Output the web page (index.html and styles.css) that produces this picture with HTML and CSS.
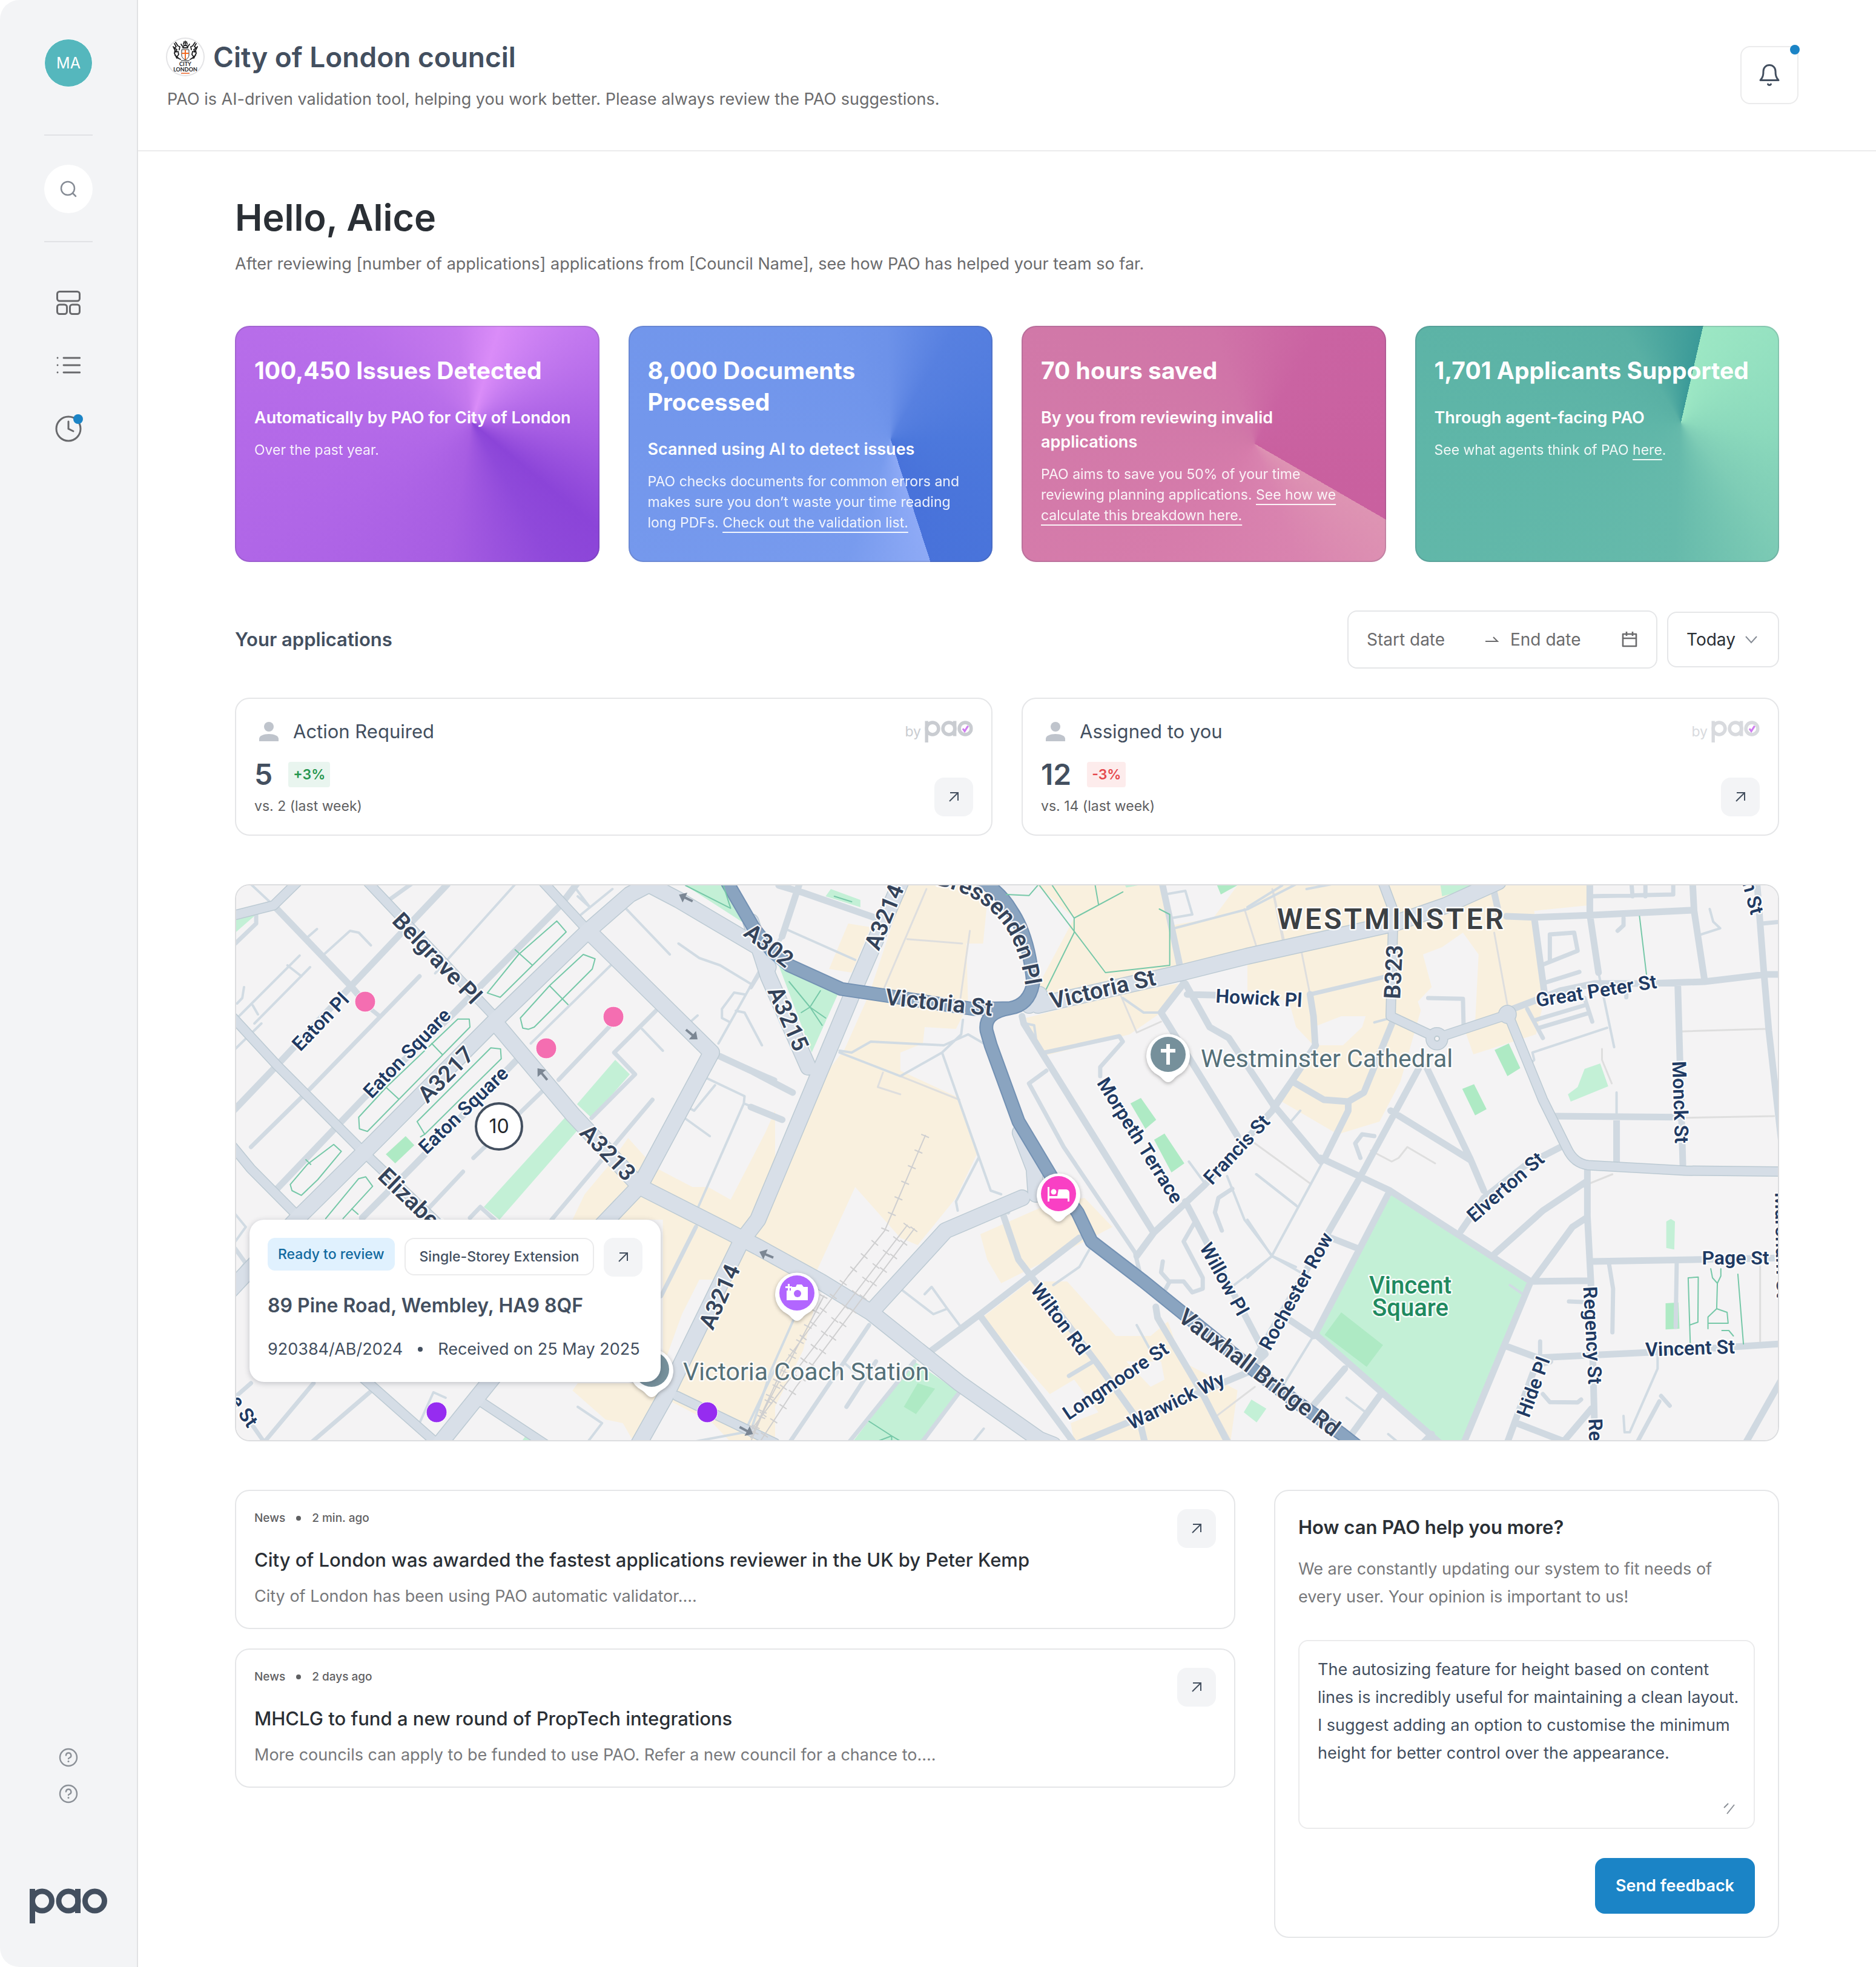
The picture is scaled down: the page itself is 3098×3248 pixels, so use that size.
FILE: index.html
```html
<!DOCTYPE html>
<html lang="en">
<head>
<meta charset="utf-8">
<title>PAO – City of London council</title>
<meta name="viewport" content="width=device-width, initial-scale=1">
<link rel="stylesheet" href="styles.css">
</head>
<body>
<svg class="sprite" aria-hidden="true">
  <symbol id="i-open" viewBox="0 0 20 20"><path d="M3 17 17 3M4 3h13v13" fill="none" stroke="currentColor" stroke-width="2"/></symbol>
  <symbol id="i-help" viewBox="0 0 32 32"><g fill="none" stroke="currentColor" stroke-width="2.400" stroke-linecap="round" stroke-linejoin="round"><circle cx="16" cy="16" r="14"/><path d="M12 12.500a4.200 4.200 0 1 1 6 4c-1.300.6-2 1-2 1.500"/></g><circle cx="16" cy="22.500" r="1.500" fill="currentColor"/></symbol>
  <symbol id="i-person" viewBox="0 0 48 48"><circle cx="24" cy="16" r="8" fill="currentColor"/><path d="M8 40v-4c0-5 7-8 16-8s16 3 16 8v4z" fill="currentColor"/></symbol>
  <symbol id="i-pao" viewBox="0 0 128 58"><g fill="none" stroke="currentColor" stroke-width="9"><circle cx="20.500" cy="21" r="16"/><circle cx="64" cy="21" r="16"/><circle cx="107.500" cy="21" r="16"/><path d="M4.500 1v57M79.500 1v40"/></g></symbol>
</svg>

<div class="app">
  <aside class="sidebar">
    <div class="sidebar-top">
      <a class="avatar" href="#profile">MA</a>
      <hr class="rule">
      <button class="search" type="button" aria-label="Search">
        <svg width="32" height="32" viewBox="0 0 32 32" fill="none" stroke="currentColor" stroke-width="2.500" stroke-linecap="round"><circle cx="15" cy="15" r="11"/><path d="m23 23 5 5"/></svg>
      </button>
      <hr class="rule">
      <nav class="nav" aria-label="Main">
        <a href="#dashboard" aria-label="Dashboard"><svg width="40" height="40" viewBox="0 0 40 40" fill="none" stroke="currentColor" stroke-width="3"><rect x="1.500" y="1.500" width="37" height="15.500" rx="4"/><rect x="1.500" y="23" width="16" height="15.500" rx="4"/><rect x="22.500" y="23" width="16" height="15.500" rx="4"/></svg></a>
        <a href="#list" aria-label="Applications"><svg width="40" height="40" viewBox="0 0 40 40" fill="none" stroke="currentColor" stroke-width="2.800" stroke-linecap="round"><path d="M12 8h27M12 20h27M12 32h27M2 8h.1M2 20h.1M2 32h.1"/></svg></a>
        <a class="nav-badged" href="#history" aria-label="History"><svg width="44" height="44" viewBox="0 0 44 44" fill="none" stroke="currentColor" stroke-width="3" stroke-linecap="round"><circle cx="22" cy="22" r="20"/><path d="M22 10v12l8 4"/></svg><span class="dot dot-nav"></span></a>
      </nav>
    </div>
    <div class="sidebar-bottom">
      <a href="#help" aria-label="Help"><svg width="32" height="32"><use href="#i-help"/></svg></a>
      <a href="#support" aria-label="Support"><svg width="32" height="32"><use href="#i-help"/></svg></a>
      <svg class="brand" width="128" height="58" role="img" aria-label="pao"><use href="#i-pao"/></svg>
    </div>
  </aside>

  <div class="page">
    <header class="header">
      <div>
        <div class="council">
          <svg class="crest" width="60" height="60" viewBox="0 0 60 60" role="img" aria-label="City of London crest">
            <path d="M24 18h12v9c0 4-3 6-6 8-3-2-6-4-6-8z" fill="#fff" stroke="#222" stroke-width="1"/>
            <path d="M30 18v16M24 24h12" stroke="#f26a21" stroke-width="2"/>
            <g fill="none" stroke="#1d1d1f" stroke-width="1.800" stroke-linecap="round" stroke-linejoin="round">
              <path d="M12 8l3 5-3 2 4 3-2 4 4-1 1 5-3 4 4 3M14 6l4 6 3 1-1 5M10 13l3 6-1 5 4 8M13 27l5 5 4 2M48 8l-3 5 3 2-4 3 2 4-4-1-1 5 3 4-4 3M46 6l-4 6-3 1 1 5M50 13l-3 6 1 5-4 8M47 27l-5 5-4 2"/>
              <path d="M26 15c0-3 2-4 4-4s4 1 4 4zM27 9l1-4M30 9V4M33 9l-1-4M25 12l-2-3M35 12l2-3"/>
            </g>
            <path d="M23 36h14" stroke="#888" stroke-width="2"/>
            <text x="30" y="45" text-anchor="middle" class="crest-text">CITY</text>
            <text x="30" y="54" text-anchor="middle" class="crest-text">LONDON</text>
            <path d="M23 57h14" stroke="#f08a5d" stroke-width="2"/>
          </svg>
          <h1>City of London council</h1>
        </div>
        <p class="lead">PAO is AI-driven validation tool, helping you work better. Please always review the PAO suggestions.</p>
      </div>
      <button class="bell" type="button" aria-label="Notifications">
        <svg width="40" height="40" viewBox="0 0 40 40" fill="none" stroke="currentColor" stroke-width="3" stroke-linecap="round" stroke-linejoin="round"><path d="M20 3.500c-6 0-10 4.500-10 10 0 6-.5 10-5 15h30c-4.500-5-5-9-5-15 0-5.500-4-10-10-10zM17.500 35c1 2 4 2 5 0"/></svg>
        <span class="dot dot-bell"></span>
      </button>
    </header>

    <main class="main">
      <section class="intro">
        <h2>Hello, Alice</h2>
        <p class="lead">After reviewing [number of applications] applications from [Council Name], see how PAO has helped your team so far.</p>
      </section>

      <section class="stats" aria-label="Highlights">
        <article class="stat stat-purple">
          <h3>100,450 Issues Detected</h3>
          <h4>Automatically by PAO for City of London</h4>
          <p>Over the past year.</p>
        </article>
        <article class="stat stat-blue">
          <h3>8,000 Documents Processed</h3>
          <h4>Scanned using AI to detect issues</h4>
          <p>PAO checks documents for common errors and makes sure you don’t waste your time reading long PDFs. <a href="#validation">Check out the validation list.</a></p>
        </article>
        <article class="stat stat-pink">
          <h3>70 hours saved</h3>
          <h4>By you from reviewing invalid applications</h4>
          <p>PAO aims to save you 50% of your time reviewing planning applications. <a href="#breakdown">See how we calculate this breakdown here.</a></p>
        </article>
        <article class="stat stat-green">
          <h3>1,701 Applicants Supported</h3>
          <h4>Through agent-facing PAO</h4>
          <p>See what agents think of PAO <a href="#agents">here</a>.</p>
        </article>
      </section>

      <section class="toolbar">
        <h3>Your applications</h3>
        <div class="filters">
          <div class="range">
            <input class="range-start" type="text" placeholder="Start date" aria-label="Start date">
            <svg width="24" height="24" viewBox="0 0 24 24" fill="none" stroke="currentColor" stroke-width="2"><path d="M1 15h20l-7-7"/></svg>
            <input class="range-end" type="text" placeholder="End date" aria-label="End date">
            <svg width="28" height="28" viewBox="0 0 28 28" fill="none" stroke="currentColor" stroke-width="2.600" stroke-linejoin="round"><path d="M3 5h22v20H3zM3 12h22M9 1v7M19 1v7"/></svg>
          </div>
          <label class="period">
            <select aria-label="Period"><option>Today</option></select>
            <svg width="20" height="20" viewBox="0 0 20 20" fill="none" stroke="currentColor" stroke-width="2"><path d="m1 5 9 10 9-10"/></svg>
          </label>
        </div>
      </section>

      <section class="summary">
        <article class="card tally">
          <div>
            <h4><svg width="48" height="48"><use href="#i-person"/></svg>Action Required</h4>
            <p class="tally-value">5 <span class="delta delta-up">+3%</span></p>
            <p class="tally-note">vs. 2 (last week)</p>
          </div>
          <div class="tally-side">
            <span class="by">by <svg width="80" height="36" viewBox="0 0 128 58"><use href="#i-pao" width="128" height="58"/><path d="m101 21 5 7 9-14" fill="none" stroke="#cf7df0" stroke-width="5"/></svg></span>
            <button class="open" type="button" aria-label="Open action required"><svg width="20" height="20"><use href="#i-open"/></svg></button>
          </div>
        </article>
        <article class="card tally">
          <div>
            <h4><svg width="48" height="48"><use href="#i-person"/></svg>Assigned to you</h4>
            <p class="tally-value">12 <span class="delta delta-down">-3%</span></p>
            <p class="tally-note">vs. 14 (last week)</p>
          </div>
          <div class="tally-side">
            <span class="by by-faint">by <svg width="80" height="36" viewBox="0 0 128 58"><use href="#i-pao" width="128" height="58"/><path d="m101 21 5 7 9-14" fill="none" stroke="#cf7df0" stroke-width="5"/></svg></span>
            <button class="open" type="button" aria-label="Open assigned to you"><svg width="20" height="20"><use href="#i-open"/></svg></button>
          </div>
        </article>
      </section>

      <section class="map" aria-label="Map of applications">
        <svg class="map-canvas" viewBox="2 2 2546 916" preserveAspectRatio="xMidYMid slice" role="img" aria-label="Street map of Westminster">
          <defs>
            <g id="roads-l">
              <g transform="translate(-8 -10) scale(.574 .6)"><path d="M0 1135 195 935 385 755 765 390 1030 145 1150 45 1210 15M765 400 985 650 1180 850M1190 10 1290 60 1520 190 1548 245M1385 480 1180 845 1040 985M1030 145 1385 480M760 1370 600 1560"/></g>
              <g transform="translate(852 -10) scale(.574 .6)"><path d="M436 0 300 300 20 940-28 1000-248 1430-330 1570M-318 850-60 975 20 1015 200 1110 345 1195 600 1390 830 1545 870 1560M0 120 50 270 165 520M345 1195 450 1085 560 970 780 880M820 870 815 800 775 700M825 350 1240 260 1428 215 1850 125 2000 75 2150 10M800 350 830 320"/></g>
            </g>
            <g id="roads-m">
              <g transform="translate(1672 -10) scale(.574 .6)"><path d="M385 0 420 90 412 380 545 440 750 375 850 610 920 745Q940 785 980 790L1260 805 1560 808"/><circle cx="545" cy="442" r="18"/><circle cx="748" cy="375" r="12"/></g>
              <g transform="translate(-8 -10) scale(.574 .6)"><path d="M385 0 765 385M890 0 1030 145M0 375 135 515 385 755 620 970M0 105 125 75 205 0M0 730 60 800 200 935M1285 1425 1568 1555M340 1340 600 1560M720 1440 910 1560"/></g>
            </g>
            <g id="roads-a">
              <g transform="translate(852 -10) scale(.574 .6)"><path d="M-75 0 10 140 60 200 110 240 260 305 400 325 640 360 745 358Q800 350 812 290 800 160 750 90 720 40 660 5M745 358Q670 370 678 420L690 460 770 670 870 830 940 920 980 1000 1130 1110 1240 1195 1428 1340 1560 1435 1700 1530 1760 1575"/></g>
            </g>
            <g id="rails"><g transform="translate(852 -10) scale(.574 .6)"><path d="M502 708 385 970 280 1095 100 1330 0 1540M470 965 130 1400 20 1560M450 955 150 1330 0 1520M210 1150 40 1460 0 1550"/></g></g>
            <path id="arrow" d="M-12-2H2v-7L13 0 2 9V2h-14z"/>
            <path id="pin" d="M0 46c-3 0-6-2-9-5-4-5-8-7-13-10A36 36 0 1 1 22 31c-5 3-9 5-13 10-3 3-6 5-9 5z"/>
            <path id="bressenden" d="M1158-2C1215 8 1262 40 1284 84 1298 112 1304 135 1310 172"/>
          </defs>
          <rect width="2550" height="920" fill="#f4f3f4"/>

          <g fill="#f9f0de">
            <g transform="translate(-8 -10) scale(.574 .6)"><path d="M1145 715 1220 795 1330 850 1375 850 1440 885 1540 700 1568 640V1010L1480 990 1568 1040V1540L1450 1480 1290 1420 1160 1550 1130 1500 1080 1490 985 1410 1000 1390H1245V940H985L1020 870 1090 790z"/></g>
            <g transform="translate(852 -10) scale(.574 .6)"><path d="M445 17H685L668 180H620L625 350 590 415 500 410 495 455 430 480V530L600 605 650 760 590 880 480 1010 430 990 300 850 190 1080 0 1000 230 520 270 470 340 320zM0 1040 200 1120 150 1300 20 1550H-60L-110 1500-250 1430-30 1010zM820 17H1568V180L1240 250 850 330 830 290 930 110zM790 385 1060 320 1230 290 1180 370 1090 430 840 490zM660 980 850 900 960 880 1040 960 960 1000 720 1115 680 1050zM665 1210 800 1110 910 1110 1050 1260 1150 1260 1200 1220 1240 1330 1400 1410 1380 1550H930L920 1500 860 1420zM280 125 345 135 290 260 225 250z"/></g>
            <g transform="translate(1672 -10) scale(.574 .6)"><path d="M0 17H980V75L825 90 855 330 830 430 650 485 600 350 500 360 440 560 380 670 260 705 90 610 130 550 190 460 140 410 120 340 0 310z"/></g>
          </g>
          <g fill="#f4f3f4">
            <g transform="translate(-8 -10) scale(.574 .6)"><path d="M1350 1105H1400L1370 1180 1290 1345H1245L1300 1200z"/></g>
            <g transform="translate(852 -10) scale(.574 .6)"><path d="M1185 20H1400L1330 110 1210 130zM1080 1330 1180 1330 1190 1380 1150 1400zM860 1420 930 1380 1000 1470 920 1500zM830 30 910 110 860 220 820 240z"/></g>
            <g transform="translate(1672 -10) scale(.574 .6)"><path d="M505 210 560 190 620 150 665 210 655 400 520 420 490 340 530 300zM270 380 340 380 330 410 275 460H195L190 410z"/></g>
          </g>
          <g fill="#c3f0d6">
            <g transform="translate(-8 -10) scale(.574 .6)"><path d="M1305 17H1440L1480 125 1440 100zM15 108 75 100 15 150zM1108 500 1150 540 1040 660 998 622zM970 652 1003 690 775 940 730 905zM850 1535 890 1555H835z"/></g>
            <g transform="translate(852 -10) scale(.574 .6)"><path d="M80 240 250 320 175 480zM230 30 315 60V80L215 50zM470 1330 600 1415 490 1555H290zM1440 1435 1483 1460 1455 1498 1418 1470zM1075 17H1130L1080 26z"/></g>
            <g transform="translate(1672 -10) scale(.574 .6)"><path d="M415 870 815 1110 620 1560H560L195 1255zM555 17H690L560 50zM922 595 950 575 970 525 1015 510 1038 573 930 615zM1205 945 1218 938 1230 945 1228 1022 1205 1018z"/></g>
          </g>
          <g fill="#aeeac4">
            <g transform="translate(-8 -10) scale(.574 .6)"><path d="M505 710 530 735 475 785 448 760z"/></g>
            <g transform="translate(852 -10) scale(.574 .6)"><path d="M480 1390 530 1405 475 1475 440 1455zM1092 620 1122 605 1166 665 1135 690zM1160 720 1190 703 1247 785 1210 810zM1340 17H1405L1352 45z"/></g>
            <g transform="translate(1672 -10) scale(.574 .6)"><path d="M270 1195 390 1285 343 1345 222 1257zM711 473 752 455 785 523 748 545zM618 580 652 567 688 636 655 653zM1203 1170 1240 1168 1243 1240 1203 1242z"/></g>
          </g>

          <g class="line grey">
            <g transform="translate(852 -10) scale(.574 .6)"><path d="M505 30 380 310M450 168 608 180M630 145 600 350M1065 325 1110 425 1180 395M380 535 365 575 430 595M430 545 600 610M1450 1400 1340 1480 1380 1550M1420 85 1455 190M1500 30 1530 170"/></g>
            <g transform="translate(1672 -10) scale(.574 .6)"><path d="M710 150 750 360M75 40 105 170M155 200 180 320M1245 422 1490 415M1240 660 1515 655M0 715 180 840M355 750 415 780 435 770 460 740 540 785M1020 470V500L1048 565M985 840 1050 815M1475 1060V1275"/></g>
          </g>
          <g class="line thin">
            <g transform="translate(-8 -10) scale(.574 .6)"><path d="M405 185 370 150 345 145 270 210M250 140 220 165M230 245 70 400M165 240 205 270M65 350 80 375M40 300 35 330 20 345M60 17 125 75M1095 240 865 455M1130 75 1265 210M1290 180 1350 220 1410 240 1500 292M1525 250 1405 455M1480 320 1450 315 1415 360 1415 385 1435 395M1455 365 1480 370 1530 460M1345 378 1325 395M1185 415 1245 475M1370 550 1480 600 1478 620 1568 655M1395 570 1335 640 1315 630M1300 655 1380 710M1478 620 1340 920M540 1510 585 1415 620 1430M1000 1455 1070 1500 1030 1550M1340 1550 1480 1525 1568 1350M1000 50 1035 80M1100 30 1010 100M985 17 1035 80M15 925 45 960 15 1000M820 17 590 262M200 213 15 390M90 400 15 470"/></g>
            <g transform="translate(852 -10) scale(.574 .6)"><path d="M255 475 290 480 345 450 555 460 625 430 670 455M610 390 605 430 550 480 430 545 255 480M550 480 690 860 720 870M655 770 590 890 595 915M975 1020 945 1070 870 1120M430 1130 525 1200 565 1185 600 1230M565 1185 520 1125 500 1145M130 1200 60 1350 0 1520M1370 820 1420 940 1500 1040 1390 1120M1500 1040 1568 1070M1455 815 1568 900M1260 780 1310 845M1190 45 1250 35 1270 100 1210 110M1210 140 1430 85 1568 17M1070 330 1130 370H1180M790 400 815 405 820 440M1110 1230 1150 1300M100 140 300 225M270 1335 300 1360M670 1515 640 1550"/></g>
            <g transform="translate(1672 -10) scale(.574 .6)"><path d="M1010 260 1055 465M820 480 1035 412M820 480 825 500 810 515M1330 85 1340 120 1360 138 1305 155M365 397 412 385M190 1260 100 1400M285 1430 340 1470M405 1530 430 1550M0 940 70 1040 180 1100M70 1040 0 1100M25 815 145 905M125 670 152 640M755 1120 800 1150M1180 1300V1350L1100 1525H1085L1082 1480M220 775 70 1040M0 80 100 20M170 30 240 17M1062 590V660"/></g>
          </g>
          <g class="line minor">
            <g transform="translate(-8 -10) scale(.574 .6)"><path d="M545 270 230 580 60 740M520 17 450 65M1105 395 945 555M1225 365 1105 480 1165 540 1040 660M905 580 700 770M1215 610 925 940M670 808 560 920M720 905 760 940M720 905 690 935M1400 485 1568 555M1340 960 1240 1150M430 380 385 345M240 1390 100 1550M60 1390 0 1440M420 1400 225 1560M60 1500 100 1555M15 1020 45 1060 15 1100M75 95V125L15 180"/></g>
            <g transform="translate(852 -10) scale(.574 .6)"><path d="M90 160 0 300M845 480 1060 435 1070 450 1005 520V545M850 530 800 565 900 740 1105 1030 1125 1110M1385 855 1345 880 1335 920 1355 970M1275 950 1245 1000 1300 1100V1130L1270 1140 1245 1110H1205L1185 1145M1205 1112 1180 1085 1185 1055M985 1330 915 1370M340 1230 110 1555M600 1415 490 1555M470 1330 280 1555M360 1330 275 1455M720 910 740 920"/></g>
            <g transform="translate(1672 -10) scale(.574 .6)"><path d="M985 50 1225 45V17M1105 17 1108 50M1145 17V50M870 155 940 150 950 200 845 240M870 155V230M855 288 955 258M830 390 970 350M840 412 980 372M805 360 850 440M970 330 992 395M1082 110V130L1065 145M1090 310V328M850 1420 870 1442 950 1443 960 1435M925 1165 975 1167M1040 1060 1052 1130 1050 1250M1235 1060 1232 1235M1190 1425 1215 1452M1185 1440 1120 1555M520 330 620 332 622 410M365 710 330 705 310 730 325 770M180 320 410 268M842 1275V1310M1480 125 1560 118"/></g>
          </g>
          <g class="line mid">
            <g transform="translate(-8 -10) scale(.574 .6)"><path d="M125 75 350 300 390 345M625 17 345 300 135 515 0 650M1010 0 950 75 640 375 385 605 130 860M830 495 530 790 380 935"/></g>
            <g transform="translate(852 -10) scale(.574 .6)"><path d="M145 0 90 160M80 20 150 40 360 110M-90 490 0 530 120 590M0 630 90 665M780 380 785 400 1155 970M1180 0 1245 290 1180 370 1400 710M1250 290 1320 410 1375 440 1500 620 1640 780M1255 320 1340 322M1110 1040 1160 975 1305 845 1500 640 1625 460M1250 890 1480 1310 1458 1330M720 910 770 1050 1000 1340 1120 1500 1135 1560M945 990 660 1200 520 1300M660 1205 930 1555M1165 1180 1170 1210 1300 1420 1375 1560M930 1560 1430 1360"/></g>
            <g transform="translate(1672 -10) scale(.574 .6)"><path d="M985 0 985 100 1010 260M745 105 825 108 985 102 1285 88M710 40 725 105M825 108 855 320M1280 0 1285 90 1315 280M750 365 900 310 1000 290 1150 290 1315 285 1490 265H1560M1465 0 1485 250 1500 420 1545 800M1238 290 1253 800M875 655 1240 658M1062 660V790M905 738 800 790 680 880 615 970M210 770 310 815 410 860 815 1110 620 1560M410 860 195 1255 560 1560M815 1110 985 1108M710 1035 850 915 975 835M820 1110 935 960 975 935M978 800 978 930 988 1110 1000 1560M990 1055 1560 1045M750 1290 835 1320 1160 1305 1560 1280M745 1560 830 1340 870 1330M775 1500 910 1550 990 1460M1560 1340 1430 1560M495 520 320 830 30 1310M515 520 640 770 680 860M412 640 640 775M420 390 335 590 290 615 220 610 130 560M290 620V640L220 775M195 460 130 555 75 630M180 320 190 380 195 460M240 990 320 1020M120 1215 190 1260M280 1350 190 1450M380 1425 300 1530M530 1530 500 1560"/></g>
          </g>

          <use href="#roads-m" class="line casing-m"/>
          <use href="#roads-l" class="line casing-l"/>
          <use href="#roads-m" class="line fill-m"/>
          <use href="#roads-l" class="line fill-l"/>
          <use href="#roads-a" class="line casing-a"/>
          <use href="#roads-a" class="line fill-a"/>
          <circle cx="1985" cy="255" r="4" fill="#f4f3f4" stroke="#bccad2" stroke-width="2"/>
          <use href="#rails" class="line rail"/>
          <use href="#rails" class="line ties"/>

          <g class="line footpath">
            <g transform="translate(-8 -10) scale(.574 .6)"><path d="M940 118 967 148 870 240 777 328 740 316 830 210zM820 197 870 240M1016 210 1050 222 1042 250 875 410 858 416 842 413 835 385 920 295zM920 297 972 348M655 388H688L690 410 395 697 372 690 370 658 450 575zM580 455 610 485M450 577 484 607M750 467 778 470 780 497 560 705 538 670zM560 705 548 712M298 733 320 752 252 830 205 873 178 860 173 843 222 788zM218 775 232 788M275 937 370 827 390 822 410 848 325 937M350 910 368 925M1310 20 1440 83 1418 17"/></g>
            <g transform="translate(852 -10) scale(.574 .6)"><path d="M735 45 800 48 828 17 1020 260 1205 240V100L1175 85M865 17 930 110 1070 38M1000 72 990 17M930 110V150L850 305M110 285 170 355 215 385M170 355 200 310M145 370 170 355 205 405M340 1495 405 1535V1555M350 1555 405 1535 440 1555M240 50 290 65"/></g>
            <g transform="translate(1672 -10) scale(.574 .6)"><path d="M1128 105 1148 265M1268 1100 1297 1098 1296 1222 1272 1230M1268 1100 1274 1280M1333 1075 1338 1100 1352 1115 1362 1095V1075M1352 1115 1350 1185 1325 1208V1240M1350 1185 1380 1195 1383 1225H1325M1365 1245H1385L1398 1260M1411 1090 1427 1282"/></g>
          </g>

          <g fill="#7c8794">
            <use href="#arrow" transform="translate(745 23) rotate(206)"/>
            <use href="#arrow" transform="translate(754 248) rotate(40)"/>
            <use href="#arrow" transform="translate(508 314) rotate(230)"/>
            <use href="#arrow" transform="translate(878 612) rotate(203)"/>
            <use href="#arrow" transform="translate(844 902) rotate(28)"/>
          </g>

          <g class="label road">
            <text transform="translate(334 122) rotate(46)" dy=".35em">Belgrave Pl</text>
            <text transform="translate(348 314) rotate(-45)" dy=".35em">A3217</text>
            <text transform="translate(316 545) rotate(44)" dy=".35em">Elizabeth St</text>
            <text transform="translate(616 443) rotate(46)" dy=".35em">A3213</text>
            <text transform="translate(882 101) rotate(38)" dy=".35em">A302</text>
            <text transform="translate(1072 54) rotate(-68)" dy=".35em">A3214</text>
            <text transform="translate(914 222) rotate(66)" dy=".35em">A3215</text>
            <text transform="translate(800 681) rotate(-66)" dy=".35em">A3214</text>
            <text transform="translate(1163 195) rotate(6)" dy=".35em">Victoria St</text>
            <text transform="translate(1433 173) rotate(-13)" dy=".35em">Victoria St</text>
            <text transform="translate(1913 145) rotate(-87)" dy=".35em">B323</text>
            <text transform="translate(1692 806) rotate(37)" dy=".35em">Vauxhall Bridge Rd</text>
            <text class="along" dy=".1em"><textPath href="#bressenden">Bressenden Pl</textPath></text>
          </g>
          <g class="label street">
            <text transform="translate(141 227) rotate(-46)" dy=".35em">Eaton Pl</text>
            <text transform="translate(284 279) rotate(-46)" dy=".35em">Eaton Square</text>
            <text transform="translate(377 373) rotate(-44)" dy=".35em">Eaton Square</text>
            <text transform="translate(1691 188) rotate(3)" dy=".35em">Howick Pl</text>
            <text transform="translate(2248 176) rotate(-9)" dy=".35em">Great Peter St</text>
            <text transform="translate(2387 360) rotate(88)" dy=".35em">Monck St</text>
            <text transform="translate(1495 423) rotate(58)" dy=".35em">Morpeth Terrace</text>
            <text transform="translate(1654 438) rotate(-47)" dy=".35em">Francis St</text>
            <text transform="translate(1634 652) rotate(61)" dy=".35em">Willow Pl</text>
            <text transform="translate(1363 718) rotate(53)" dy=".35em">Wilton Rd</text>
            <text transform="translate(1752 672) rotate(-61)" dy=".35em">Rochester Row</text>
            <text transform="translate(1454 820) rotate(-34)" dy=".35em">Longmoore St</text>
            <text transform="translate(1554 853) rotate(-26)" dy=".35em">Warwick Wy</text>
            <text transform="translate(2098 500) rotate(-41)" dy=".35em">Elverton St</text>
            <text transform="translate(2478 617)" dy=".35em">Page St</text>
            <text transform="translate(2403 766) rotate(-2)" dy=".35em">Vincent St</text>
            <text transform="translate(2242 745) rotate(87)" dy=".35em">Regency St</text>
            <text transform="translate(2247 901) rotate(88)" dy=".35em">Re</text>
            <text transform="translate(2144 830) rotate(-70)" dy=".35em">Hide Pl</text>
            <text transform="translate(2507 22) rotate(75)" dy=".35em">n St</text>
            <text transform="translate(15 870) rotate(56)" dy=".35em">e St</text>
            <text transform="translate(2556 596) rotate(89)" dy=".35em">Marsham St</text>
          </g>
          <text class="label district" x="1910" y="74">WESTMINSTER</text>
          <text class="label park" x="1941" y="676">Vincent</text>
          <text class="label park" x="1941" y="713">Square</text>
          <text class="label place" x="1595" y="302">Westminster Cathedral</text>
          <text class="label place" x="740" y="819">Victoria Coach Station</text>

          <g class="pin" transform="translate(1541 281)"><use href="#pin"/><circle r="29" fill="#76909b"/><path d="M-3-17h6v8h9v6H3v20h-6V-3h-9v-6h9z" fill="#fff"/></g>
          <g class="pin" transform="translate(1360 511)"><use href="#pin"/><circle r="29" fill="#f940c4"/><path d="M-18-11h3v15h30v-4h3v13h-3V8h-30v5h-3zM0-7h13q5 1 5 6v5H-2z" fill="#fff"/><circle cx="-8" cy="-3" r="4.500" fill="#fff"/></g>
          <g class="pin" transform="translate(928 675)"><use href="#pin"/><circle r="29" fill="#b266ff"/><path d="M-17-4h7v-6h8l2-4h8l3 4h7v22h-35zM-15-15h3v4h4v3h-4v4h-3v-4h-4v-3h4z" fill="#fff"/><circle cx="1" cy="1" r="6" fill="#b266ff"/></g>
          <g class="pin" transform="translate(688 801)"><use href="#pin"/><circle r="29" fill="#76909b"/></g>

          <g fill="#f46eb1" stroke="#fff" stroke-width="1"><circle cx="215" cy="194" r="17"/><circle cx="625" cy="219" r="17"/><circle cx="514" cy="271" r="17"/></g>
          <g fill="#962cf0" stroke="#fff" stroke-width="1"><circle cx="333" cy="872" r="17"/><circle cx="780" cy="872" r="17"/></g>
          <circle cx="436" cy="400" r="38" fill="#fff" stroke="#434f5f" stroke-width="4"/>
          <text class="cluster" x="436" y="411">10</text>
        </svg>

        <article class="popover">
          <div class="popover-tags">
            <span class="tag tag-ready">Ready to review</span>
            <span class="tag tag-type">Single-Storey Extension</span>
            <button class="open" type="button" aria-label="Open application"><svg width="20" height="20"><use href="#i-open"/></svg></button>
          </div>
          <h4>89 Pine Road, Wembley, HA9 8QF</h4>
          <p>920384/AB/2024<i class="bullet"></i>Received on 25 May 2025</p>
        </article>
      </section>

      <section class="lower">
        <div class="news">
          <article class="card news-item">
            <div>
              <p class="news-meta">News<i class="bullet"></i>2 min. ago</p>
              <h4>City of London was awarded the fastest applications reviewer in the UK by Peter Kemp</h4>
              <p class="news-text">City of London has been using PAO automatic validator....</p>
            </div>
            <button class="open" type="button" aria-label="Open article"><svg width="20" height="20"><use href="#i-open"/></svg></button>
          </article>
          <article class="card news-item">
            <div>
              <p class="news-meta">News<i class="bullet"></i>2 days ago</p>
              <h4>MHCLG to fund a new round of PropTech integrations</h4>
              <p class="news-text">More councils can apply to be funded to use PAO. Refer a new council for a chance to....</p>
            </div>
            <button class="open" type="button" aria-label="Open article"><svg width="20" height="20"><use href="#i-open"/></svg></button>
          </article>
        </div>
        <form class="card feedback">
          <h3><label for="feedback">How can PAO help you more?</label></h3>
          <p>We are constantly updating our system to fit needs of every user. Your opinion is important to us!</p>
          <div class="field">
            <textarea id="feedback">The autosizing feature for height based on content lines is incredibly useful for maintaining a clean layout. I suggest adding an option to customise the minimum height for better control over the appearance.</textarea>
            <svg class="grip" width="20" height="20" viewBox="0 0 20 20" fill="none" stroke="currentColor" stroke-width="2"><path d="M1 9 8 2M6 19 18 4"/></svg>
          </div>
          <button class="send" type="button">Send feedback</button>
        </form>
      </section>
    </main>
  </div>
</div>
</body>
</html>
```
FILE: styles.css
```css
:root {
  --slate: #434f5f;
  --ink: #2a2f35;
  --grey: #6b6b6d;
  --line: #e5e6e8;
  --soft: #f3f4f6;
  --blue: #1b84c6;
}

*, *::before, *::after { box-sizing: border-box; }

body {
  margin: 0;
  background: #fff;
  color: var(--slate);
  font-family: Inter, "Liberation Sans", sans-serif;
  font-size: 27px;
  line-height: 44px;
}

h1, h2, h3, h4, p { margin: 0; }
button, input, select, textarea { font: inherit; color: inherit; }
button { cursor: pointer; }
svg { display: block; flex: none; }
.sprite { position: absolute; width: 0; height: 0; }

.app {
  display: grid;
  grid-template-columns: 228px minmax(0, 1fr);
  min-height: 100vh;
}

/* Sidebar */
.sidebar {
  display: flex;
  flex-direction: column;
  justify-content: space-between;
  padding: 64px 0 72px;
  background: var(--soft);
  border-right: 2px solid #e1e2e4;
  border-radius: 32px 0 0 32px;
}
.sidebar-top, .sidebar-bottom, .nav {
  display: flex;
  flex-direction: column;
  align-items: center;
}
.avatar {
  display: grid;
  place-items: center;
  width: 80px;
  height: 80px;
  border: 1px solid #fff;
  border-radius: 50%;
  background: #55b7bd;
  color: #fff;
  font-size: 25px;
  text-decoration: none;
}
.rule {
  width: 80px;
  height: 2px;
  margin: 78px 0 48px;
  border: 0;
  background: #e1e2e5;
}
.search {
  display: grid;
  place-items: center;
  width: 80px;
  height: 80px;
  padding: 0;
  border: 0;
  border-radius: 50%;
  background: #fff;
  color: #868c95;
}
.search + .rule { margin: 46px 0 80px; }
.nav { gap: 63px; color: #68696c; }
.nav a, .sidebar-bottom a { color: inherit; }
.nav-badged { position: relative; }
.dot {
  position: absolute;
  width: 16px;
  height: 16px;
  border-radius: 50%;
  background: var(--blue);
}
.dot-nav { top: -2px; right: -2px; }
.dot-bell { top: -4px; right: -4px; }
.sidebar-bottom { gap: 28px; color: #8b9097; }
.brand { margin-top: 112px; color: var(--slate); }

/* Header */
.header {
  display: flex;
  justify-content: space-between;
  align-items: center;
  height: 250px;
  padding: 0 128px 0 48px;
  border-bottom: 2px solid #ebebec;
}
.council {
  display: flex;
  align-items: center;
  gap: 16px;
  height: 64px;
  margin-bottom: 16px;
}
.crest { border-radius: 50%; box-shadow: 0 0 0 2px #e4e4e6; }
.crest-text { font: 700 9px Lato, sans-serif; fill: #1d1d1f; }
h1 { font-size: 46px; font-weight: 600; line-height: 64px; }
.lead { color: var(--grey); }
.bell {
  position: relative;
  display: grid;
  place-items: center;
  width: 96px;
  height: 96px;
  padding: 0;
  border: 2px solid #ebebec;
  border-radius: 16px;
  background: #fff;
  color: var(--slate);
}

/* Main column */
.main { padding: 70px 160px 48px; }
.intro { margin-bottom: 80px; }
h2 {
  margin-bottom: 16px;
  color: var(--ink);
  font-size: 61px;
  font-weight: 600;
  line-height: 78px;
}

/* Gradient cards */
.stats {
  display: grid;
  grid-template-columns: repeat(4, minmax(0, 1fr));
  gap: 48px;
  margin-bottom: 80px;
}
.stat {
  padding: 48px 32px;
  border-radius: 24px;
  box-shadow: inset 0 0 0 2px rgba(60, 60, 90, .16);
  color: #fff;
}
.stat h3 { margin-bottom: 32px; font-size: 39px; font-weight: 700; line-height: 52px; }
.stat h4 { margin-bottom: 16px; font-size: 27px; font-weight: 600; line-height: 40px; }
.stat p { font-size: 23px; line-height: 34px; opacity: .9; }
.stat a {
  color: inherit;
  text-decoration: underline;
  text-decoration-thickness: 2px;
  text-underline-offset: 7px;
  text-decoration-skip-ink: none;
}
.stat-purple { background: conic-gradient(from 16deg at 65% 41%, #da8cf8, #c57bf0 30deg, #a65de3 80deg, #8b44d8 114deg, #8f49da 134deg, #a75de2 174deg, #b066e7 224deg, #b96fea 290deg, #c67aee 335deg, #da8cf8); }
.stat-blue { background: conic-gradient(from 162deg at 72% 48%, #8eaaf6, #789bee 38deg, #7397ec 110deg, #7095eb 170deg, #6d92e9 196deg, #5780e0 228deg, #4c78dc 290deg, #4872da 360deg); }
.stat-pink { background: conic-gradient(from 120deg at 64% 50%, #de94b3, #d983af 40deg, #d67cab 100deg, #d178a8 180deg, #d074a8 220deg, #ca63a2 270deg, #c9609f 360deg); }
.stat-green { background: conic-gradient(from 13deg at 73% 41%, #9ce7c4, #8bd9bc 85deg, #7fcdb6 125deg, #66baab 170deg, #5fb6a8 250deg, #59b0a4 315deg, #3b9a98 360deg); }

/* Toolbar */
.toolbar {
  display: flex;
  justify-content: space-between;
  align-items: center;
  margin-bottom: 48px;
}
.toolbar h3 { font-size: 31px; font-weight: 600; }
.filters { display: flex; align-items: center; gap: 16px; font-size: 28px; }
.range, .period {
  display: flex;
  align-items: center;
  border: 2px solid var(--line);
  border-radius: 16px;
  background: #fff;
}
.range { height: 96px; padding: 0 30px; color: var(--grey); }
.range input {
  height: 48px;
  padding: 0;
  border: 0;
  outline: 0;
  background: none;
}
.range input::placeholder { color: var(--grey); opacity: 1; }
.range-start { width: 195px; }
.range-end { width: 183px; margin-left: 18px; }
.period { height: 92px; padding: 0 34px 0 30px; gap: 16px; color: #868c95; }
.period select {
  appearance: none;
  padding: 0;
  border: 0;
  background: none;
  color: var(--ink);
}

/* Shared card */
.card {
  border: 2px solid var(--line);
  border-radius: 24px;
  background: #fff;
}
.open {
  display: grid;
  place-items: center;
  flex: none;
  width: 64px;
  height: 64px;
  padding: 0;
  border: 0;
  border-radius: 16px;
  background: var(--soft);
  color: var(--slate);
}

/* Tallies */
.summary {
  display: grid;
  grid-template-columns: repeat(2, minmax(0, 1fr));
  gap: 48px;
  margin-bottom: 80px;
}
.tally { display: flex; justify-content: space-between; padding: 30px; }
.tally h4 {
  display: flex;
  align-items: center;
  gap: 16px;
  margin-bottom: 16px;
  font-size: 31px;
  font-weight: 400;
  line-height: 48px;
}
.tally h4 svg { color: #bfc4cc; }
.tally-value {
  display: flex;
  align-items: center;
  gap: 26px;
  margin-bottom: 4px;
  font-size: 48px;
  font-weight: 600;
  line-height: 62px;
}
.delta {
  padding: 0 8px;
  border-radius: 4px;
  font-size: 23px;
  line-height: 42px;
}
.delta-up { background: #e9f5ef; color: #27964f; }
.delta-down { background: #fdecec; color: #e5484d; }
.tally-note { color: #5f6062; font-size: 23px; line-height: 34px; }
.tally-side {
  display: flex;
  flex-direction: column;
  justify-content: space-between;
  align-items: flex-end;
}
.by {
  display: flex;
  align-items: center;
  gap: 6px;
  color: #c9ccd1;
  font-size: 23px;
  line-height: 48px;
}
.by-faint { color: #d8dade; }

/* Map */
.map {
  position: relative;
  overflow: hidden;
  height: 920px;
  margin-bottom: 80px;
  border: 2px solid #dcdddf;
  border-radius: 24px;
}
.map-canvas { width: 100%; height: 100%; }
.line { fill: none; stroke-linecap: round; stroke-linejoin: round; }
.line path, .line circle, #roads-l path, #roads-m path, #roads-m circle, #roads-a path, #rails path { vector-effect: non-scaling-stroke; }
.grey { stroke: #dedede; stroke-width: 3px; }
.thin { stroke: #d1dbe3; stroke-width: 4px; }
.minor { stroke: #d1dae2; stroke-width: 7px; }
.mid { stroke: #d0d9e1; stroke-width: 11px; }
.casing-m { stroke: #bccad3; stroke-width: 17px; }
.fill-m { stroke: #d5dde6; stroke-width: 14px; }
.casing-l { stroke: #bccad3; stroke-width: 28px; }
.fill-l { stroke: #d8dfe8; stroke-width: 25px; }
.casing-a { stroke: #7391b3; stroke-width: 23px; }
.fill-a { stroke: #8aa4c0; stroke-width: 19px; }
.footpath { stroke: #76c8a8; stroke-width: 2px; }
.rail { stroke: #cfcfd0; stroke-width: 2px; }
.ties { stroke: #cfcfd0; stroke-width: 14px; stroke-linecap: butt; stroke-dasharray: 2px 26px; }
.label {
  font-family: Roboto, sans-serif;
  font-weight: 600;
  text-anchor: middle;
  paint-order: stroke;
  stroke: rgba(255, 255, 255, .85);
  stroke-width: 5px;
  stroke-linejoin: round;
}
.road { fill: #34435a; font-size: 38px; }
.street { fill: #1f3a63; font-size: 32px; }
.along { text-anchor: start; }
.district { fill: #3c4043; font-size: 48px; letter-spacing: 4px; }
.park { fill: #1f8a60; font-size: 40px; font-weight: 500; }
.place { fill: #557079; font-size: 41px; font-weight: 400; text-anchor: start; }
.pin { fill: #fff; filter: drop-shadow(0 2px 3px rgba(0, 0, 0, .3)); }
.cluster { fill: #22262b; font-size: 32px; text-anchor: middle; }

.popover {
  position: absolute;
  left: 22px;
  bottom: 96px;
  padding: 30px;
  border-radius: 24px;
  background: #fff;
  box-shadow: 0 2px 10px rgba(30, 40, 60, .25);
}
.popover-tags { display: flex; align-items: flex-start; gap: 16px; margin-bottom: 24px; }
.tag { border-radius: 12px; font-size: 23px; font-weight: 500; white-space: nowrap; }
.tag-ready { padding: 0 17px; background: #e0f1fe; color: #11699f; line-height: 54px; }
.tag-type { padding: 0 23px; border: 2px solid #ebebec; border-radius: 16px; line-height: 58px; }
.popover h4 { margin-bottom: 24px; font-size: 32px; font-weight: 600; line-height: 48px; }
.popover p { display: flex; align-items: center; line-height: 48px; }
.bullet {
  width: 8px;
  height: 8px;
  margin: 0 25px;
  border-radius: 50%;
  background: currentColor;
}

/* News and feedback */
.lower {
  display: grid;
  grid-template-columns: minmax(0, 1fr) 834px;
  align-items: start;
  gap: 64px;
}
.news { display: grid; gap: 32px; }
.news-item { display: flex; justify-content: space-between; padding: 30px; }
.news-meta {
  display: flex;
  align-items: center;
  margin-bottom: 32px;
  color: #5f6062;
  font-size: 19px;
  font-weight: 500;
  line-height: 30px;
}
.news-meta .bullet { margin: 0 18px; }
.news h4 { margin-bottom: 16px; color: var(--ink); font-size: 31px; font-weight: 500; line-height: 44px; }
.news-text { color: #77787b; }
.feedback { display: flex; flex-direction: column; padding: 38px; }
.feedback h3 { margin-bottom: 24px; color: var(--ink); font-size: 31px; font-weight: 600; line-height: 44px; }
.feedback p { margin-bottom: 48px; color: #77787b; line-height: 46px; }
.field { position: relative; margin-bottom: 48px; }
.field textarea {
  display: block;
  width: 100%;
  height: 312px;
  padding: 24px 16px 24px 30px;
  border: 2px solid #ebebec;
  border-radius: 16px;
  background: #fff;
  line-height: 46px;
  resize: none;
}
.grip { position: absolute; right: 32px; bottom: 24px; color: #8b9097; }
.send {
  align-self: flex-end;
  height: 92px;
  padding: 0 34px;
  border: 0;
  border-radius: 16px;
  background: var(--blue);
  color: #fff;
  font-weight: 600;
}
```
